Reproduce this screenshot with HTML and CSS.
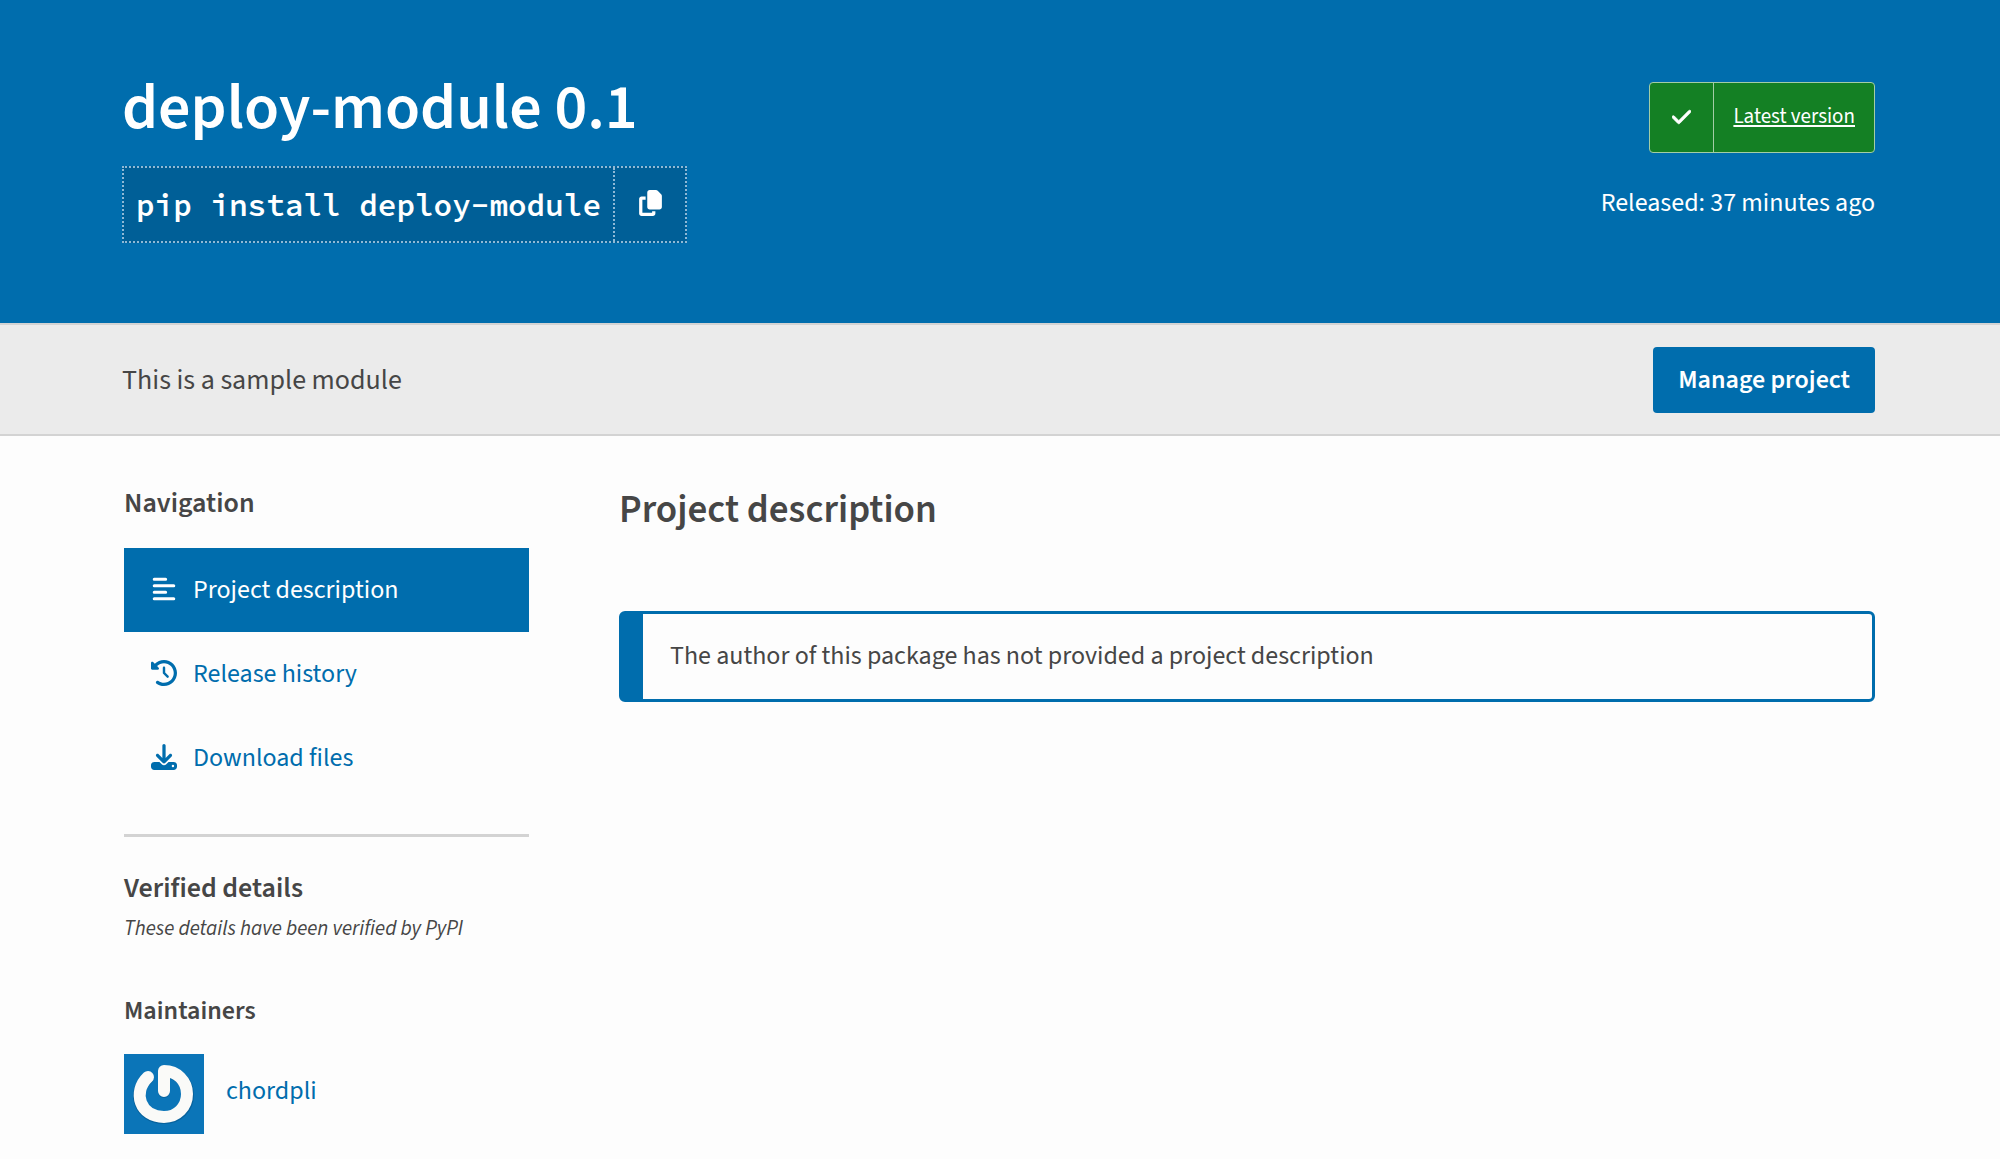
FILE: index.html
```html
<!DOCTYPE html>
<html lang="en">
<head>
<meta charset="utf-8">
<meta name="viewport" content="width=device-width, initial-scale=1">
<title>deploy-module · PyPI</title>
<link rel="stylesheet" href="styles.css">
</head>
<body>
<header class="hero">
  <div class="hero-main">
    <h1 class="hero-title">deploy-module 0.1</h1>
    <div class="pip">
      <code class="pip-command">pip install deploy-module</code>
      <button class="pip-copy" type="button" aria-label="Copy pip instructions">
        <svg class="copy-icon" viewBox="0 0 448 512" aria-hidden="true"><path d="M208 0h124.100c12.700 0 24.900 5.100 33.900 14.100l67.900 67.900c9 9 14.100 21.200 14.100 33.900V336c0 26.500-21.500 48-48 48H208c-26.500 0-48-21.500-48-48V48c0-26.500 21.500-48 48-48zM48 128h80v64H64v256h192v-32h64v48c0 26.500-21.500 48-48 48H48c-26.500 0-48-21.500-48-48V176c0-26.500 21.500-48 48-48z"/></svg>
      </button>
    </div>
  </div>
  <div class="hero-meta">
    <a class="badge" href="#latest">
      <span class="badge-icon"><svg class="check-icon" viewBox="0 0 448 512" aria-hidden="true"><path stroke="currentColor" stroke-width="16" d="M438.600 105.400c12.500 12.500 12.500 32.800 0 45.300l-256 256c-12.500 12.500-32.800 12.500-45.300 0l-128-128c-12.500-12.500-12.500-32.800 0-45.300s32.800-12.500 45.300 0L160 338.700 393.400 105.400c12.500-12.500 32.800-12.500 45.300 0z"/></svg></span>
      <span class="badge-text">Latest version</span>
    </a>
    <p class="released">Released: <time>37 minutes ago</time></p>
  </div>
</header>

<section class="summary">
  <p class="summary-text">This is a sample module</p>
  <button class="manage" type="button">Manage project</button>
</section>

<div class="content">
  <aside class="sidebar">
    <h2 class="side-title">Navigation</h2>
    <nav class="tabs" aria-label="Navigation for deploy-module">
      <a class="tab tab-active" href="#description"><svg class="tab-icon" viewBox="0 0 512 512" aria-hidden="true"><g fill="none" stroke="currentColor" stroke-width="60" stroke-linecap="round"><path d="M64 62h224M64 190h384M64 318h224M64 446h384"/></g></svg>Project description</a>
      <a class="tab" href="#history"><svg class="tab-icon" viewBox="0 0 512 512" aria-hidden="true"><path d="M75 75L41 41C25.900 25.900 0 36.600 0 57.900V168c0 13.300 10.700 24 24 24h110.100c21.400 0 32.100-25.900 17-41l-30.800-30.800C155 85.500 203 64 256 64c106 0 192 86 192 192s-86 192-192 192c-40.800 0-78.600-12.700-109.700-34.400-14.500-10.100-34.400-6.600-44.600 7.900s-6.600 34.400 7.900 44.600C151.200 495 201.700 512 256 512c141.400 0 256-114.600 256-256S397.400 0 256 0C185.300 0 121.300 28.700 75 75zm181 53c-13.300 0-24 10.700-24 24v104c0 6.400 2.500 12.500 7 17l72 72c9.400 9.400 24.600 9.400 33.900 0s9.400-24.600 0-33.900l-65-65V152c0-13.300-10.700-24-24-24z"/></svg>Release history</a>
      <a class="tab" href="#files"><svg class="tab-icon" viewBox="0 0 512 512" aria-hidden="true"><path d="M288 32c0-17.700-14.300-32-32-32s-32 14.300-32 32v242.700l-73.400-73.400c-12.500-12.500-32.800-12.500-45.300 0s-12.500 32.800 0 45.300l128 128c12.500 12.500 32.800 12.500 45.300 0l128-128c12.500-12.500 12.500-32.800 0-45.300s-32.800-12.500-45.300 0L288 274.700V32zM64 352c-35.300 0-64 28.700-64 64v32c0 35.300 28.700 64 64 64h384c35.300 0 64-28.700 64-64v-32c0-35.300-28.700-64-64-64H346.500l-45.300 45.300c-25 25-65.500 25-90.500 0L165.500 352H64zm368 56a24 24 0 1 1 0 48 24 24 0 1 1 0-48z"/></svg>Download files</a>
    </nav>
    <section class="verified">
      <h2 class="side-title">Verified details</h2>
      <p class="verified-note">These details have been verified by PyPI</p>
      <h3 class="maintainers-title">Maintainers</h3>
      <a class="maintainer" href="#chordpli">
        <svg class="avatar" viewBox="0 0 80 80" aria-hidden="true">
          <rect width="80" height="80" fill="#0b75b8"/>
          <g fill="none" stroke-linecap="round" stroke-linejoin="round" stroke-width="12">
            <path stroke="#07629d" d="M24 24C7 38 15 64 40 64C54 64 64 54 64 41C64 28 54 18 40 18V38"/>
            <path stroke="#fafaf8" d="M24 23C8 38 16 63 40 63C53 63 63 53 63 40C63 27 53 17 40 17V37"/>
          </g>
        </svg>
        <span class="maintainer-name">chordpli</span>
      </a>
    </section>
  </aside>
  <main class="main" id="description">
    <h2 class="main-title">Project description</h2>
    <div class="callout"><p class="callout-text">The author of this package has not provided a project description</p></div>
  </main>
</div>
</body>
</html>
```

FILE: styles.css
```css
:root {
  --blue: #006dad;
  --blue-dark: #005f97;
  --text: #464646;
  --gutter-left: 122px;
  --gutter-right: 125px;
}

* {
  box-sizing: border-box;
}

body {
  margin: 0;
  background: #fdfdfd;
  color: var(--text);
  font-family: "Source Sans 3", "Noto Sans CJK SC", "Noto Sans", sans-serif;
  font-size: 26px;
  line-height: 36px;
}

h1, h2, h3, p {
  margin: 0;
}

a {
  color: var(--blue);
  text-decoration: none;
}

button {
  border: 0;
  color: #fff;
  font: inherit;
  cursor: pointer;
}

svg {
  display: block;
  flex: none;
  fill: currentColor;
}

.hero {
  display: flex;
  justify-content: space-between;
  padding: 72px var(--gutter-right) 80px var(--gutter-left);
  background: var(--blue);
  color: #fff;
}

.hero-title {
  margin-bottom: 22px;
  font-size: 64px;
  font-weight: 600;
  line-height: 72px;
}

.pip {
  display: inline-flex;
  height: 77px;
  border: 2px dotted #8fb9d6;
  background: var(--blue-dark);
}

.pip-command {
  padding: 0 12px;
  font-family: "Source Code Pro", "Noto Sans Mono CJK SC", "Liberation Mono", monospace;
  font-size: 31px;
  font-weight: 600;
  line-height: 73px;
}

.pip-copy {
  display: flex;
  align-items: center;
  justify-content: center;
  width: 72px;
  padding: 0 0 4px;
  border-left: 2px dotted #8fb9d6;
  background: transparent;
}

.copy-icon {
  width: 23px;
  height: 26px;
}

.hero-meta {
  display: flex;
  flex-direction: column;
  align-items: flex-end;
  gap: 32px;
  padding-top: 10px;
}

.badge {
  display: flex;
  height: 71px;
  border: 1px solid #a3cda6;
  border-radius: 4px;
  background: #148024;
  color: #fff;
  font-size: 21px;
  line-height: 67px;
}

.badge-icon {
  display: flex;
  align-items: center;
  justify-content: center;
  width: 64px;
  padding-bottom: 2px;
  border-right: 1px solid #a3cda6;
}

.check-icon {
  width: 19px;
  height: 22px;
}

.badge-text {
  padding: 0 19px;
  text-decoration: underline;
}

.summary {
  display: flex;
  align-items: center;
  justify-content: space-between;
  padding: 22px var(--gutter-right) 21px var(--gutter-left);
  border-top: 2px solid #d3d3d3;
  border-bottom: 2px solid #d3d3d3;
  background: #ebebeb;
}

.summary-text {
  font-size: 28px;
}

.manage {
  height: 66px;
  padding: 0 25px;
  border-radius: 4px;
  background: var(--blue);
  font-weight: 600;
}

.content {
  display: grid;
  grid-template-columns: 405px minmax(0, 1fr);
  gap: 90px;
  padding: 49px var(--gutter-right) 24px 124px;
}

.side-title {
  font-size: 28px;
  font-weight: 600;
  line-height: 36px;
}

.tabs {
  margin-top: 27px;
  padding-bottom: 34px;
  border-bottom: 3px solid #d3d3d3;
}

.tab {
  display: flex;
  align-items: center;
  gap: 16px;
  height: 84px;
  padding-left: 27px;
}

.tab-active {
  background: var(--blue);
  color: #fff;
}

.tab-icon {
  width: 26px;
  height: 26px;
  margin-bottom: 2px;
}

.verified {
  padding-top: 33px;
}

.verified-note {
  margin-top: 4px;
  font-size: 21px;
  font-style: italic;
}

.maintainers-title {
  margin: 47px 0 25px;
  font-size: 26px;
  font-weight: 600;
}

.maintainer {
  display: flex;
  gap: 22px;
}

.avatar {
  width: 80px;
  height: 80px;
}

.maintainer-name {
  line-height: 74px;
}

.main-title {
  font-size: 39px;
  font-weight: 600;
  line-height: 50px;
}

.callout {
  margin-top: 76px;
  padding: 24px 27px 25px;
  border: 3px solid var(--blue);
  border-left-width: 24px;
  border-radius: 6px;
}
```
